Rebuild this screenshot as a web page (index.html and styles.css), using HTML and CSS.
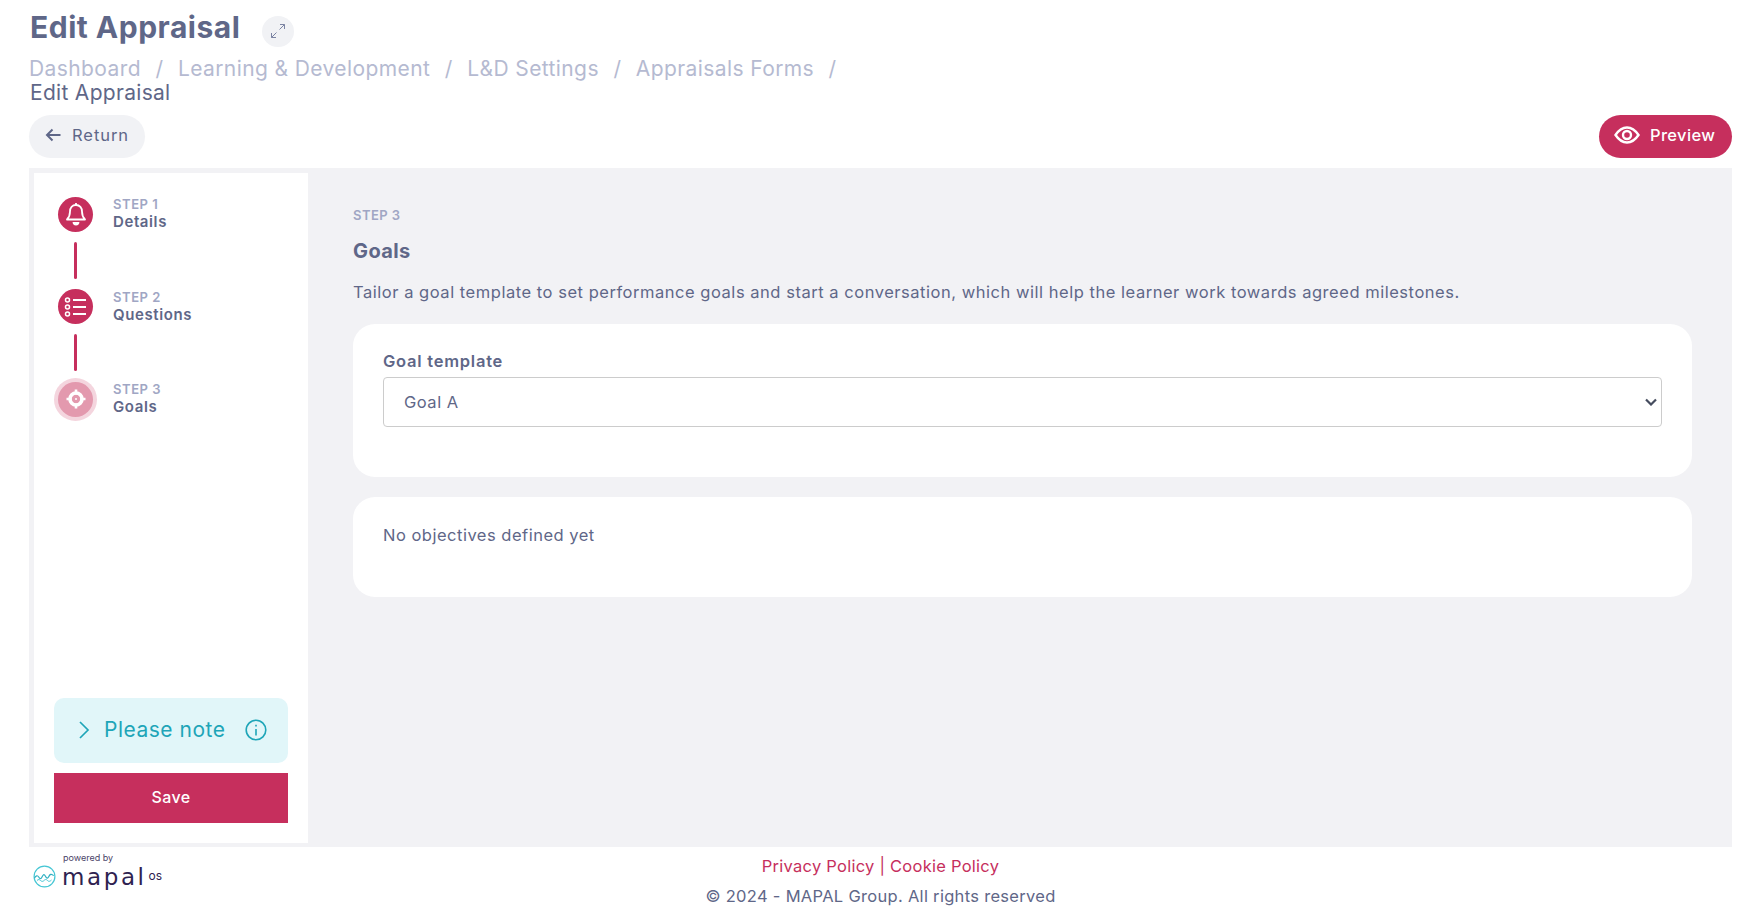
FILE: index.html
```html
<!DOCTYPE html>
<html lang="en">
<head>
<meta charset="utf-8">
<title>Edit Appraisal</title>
<link rel="stylesheet" href="styles.css">
</head>
<body>
<div class="page">
  <header class="head">
    <div class="title-row">
      <h1 class="title">Edit Appraisal</h1>
      <button class="expand" aria-label="Expand">
        <svg width="18" height="18" viewBox="0 0 18 18" fill="none" stroke="#7c84a3" stroke-width="1"><path d="M11 2.500h4.500V7M15.500 2.500 10.500 7.500M7 15.500H2.500V11M2.500 15.500l5-5"/></svg>
      </button>
    </div>
    <nav class="crumbs">
      <a>Dashboard</a><span class="sep">/</span><a>Learning &amp; Development</a><span class="sep">/</span><a>L&amp;D Settings</a><span class="sep">/</span><a>Appraisals Forms</a><span class="sep">/</span>
      <div class="current">Edit Appraisal</div>
    </nav>
    <div class="actions">
      <button class="return">
        <svg width="17" height="14" viewBox="0 0 17 14" fill="none" stroke="#5f6788" stroke-width="2"><path d="M15.500 7H2M7.500 1.500 2 7l5.500 5.500"/></svg>
        Return
      </button>
      <button class="preview">
        <svg width="26" height="18" viewBox="0 0 26 18" fill="none" stroke="#fff" stroke-width="2.400"><path d="M1.500 9C5 3.800 8.800 1.500 13 1.500S21 3.800 24.500 9C21 14.200 17.200 16.500 13 16.500S5 14.200 1.500 9Z"/><circle cx="13" cy="9" r="4"/></svg>
        Preview
      </button>
    </div>
  </header>

  <div class="shell">
    <aside class="side">
      <ol class="steps">
        <li class="step">
          <span class="dot">
            <svg width="22" height="24" viewBox="0 0 22 24" fill="none" stroke="#fff" stroke-width="1.800"><path d="M11 3c-3.800 0-6 2.800-6 6.500 0 4-1 6-3 8h18c-2-2-3-4-3-8C17 5.800 14.800 3 11 3Z" stroke-linejoin="round"/><path d="M11 1v2"/><path d="M8.500 20a2.500 2.500 0 0 0 5 0" fill="#fff"/></svg>
          </span>
          <div class="step-text"><div class="step-no">STEP 1</div><div class="step-name">Details</div></div>
        </li>
        <li class="line"></li>
        <li class="step">
          <span class="dot">
            <svg width="24" height="22" viewBox="0 0 24 22" fill="none" stroke="#fff" stroke-width="1.500"><circle cx="3.500" cy="4" r="2"/><circle cx="3.500" cy="11" r="2"/><circle cx="3.500" cy="18" r="2"/><path d="M9 4h13M9 11h13M9 18h13" stroke-width="1.800"/></svg>
          </span>
          <div class="step-text"><div class="step-no">STEP 2</div><div class="step-name">Questions</div></div>
        </li>
        <li class="line"></li>
        <li class="step">
          <span class="dot current-dot">
            <svg width="24" height="24" viewBox="0 0 24 24" fill="none" stroke="#fff"><circle cx="12" cy="12" r="6" stroke-width="3.600"/><circle cx="12" cy="12" r="1" fill="#fff" stroke="none"/><path d="M12 2.500v5M12 16.500v5M2.500 12h5M16.500 12h5" stroke-width="2.600"/></svg>
          </span>
          <div class="step-text"><div class="step-no">STEP 3</div><div class="step-name">Goals</div></div>
        </li>
      </ol>
      <div class="side-foot">
        <div class="note">
          <svg width="12" height="20" viewBox="0 0 12 20" fill="none" stroke="#1ea5b8" stroke-width="1.700"><path d="m2 2 8 8-8 8"/></svg>
          <span class="note-text">Please note</span>
          <svg width="22" height="22" viewBox="0 0 22 22" fill="none" stroke="#1ea5b8" stroke-width="1.600"><circle cx="11" cy="11" r="9.800"/><path d="M11 10v6.500"/><path d="M11 5.800v1.800"/></svg>
        </div>
        <button class="save">Save</button>
      </div>
    </aside>
    <main class="main">
      <div class="eyebrow">STEP 3</div>
      <h2 class="goals">Goals</h2>
      <p class="desc">Tailor a goal template to set performance goals and start a conversation, which will help the learner work towards agreed milestones.</p>
      <section class="card card-form">
        <label class="field-label" for="tpl">Goal template</label>
        <div class="select-wrap">
          <select id="tpl" class="select"><option>Goal A</option></select>
          <svg class="select-arrow" width="12" height="8" viewBox="0 0 12 8" fill="none" stroke="#454c5e" stroke-width="2.200"><path d="m1 1.500 5 5 5-5"/></svg>
        </div>
      </section>
      <section class="card card-empty">No objectives defined yet</section>
    </main>
  </div>

  <footer class="foot">
    <div class="logo">
      <svg class="logo-mark" width="23" height="23" viewBox="0 0 23 23" fill="none"><circle cx="11.500" cy="11.500" r="10.400" stroke="#45c6d4" stroke-width="1.200"/><path d="M1.500 13c1.500-2.500 3-3 4.200-1s2.300 2.300 3.300 0 2-3.500 3.300-1 2.300 3 3.400.7 2.500-3.500 5-1" stroke="#2fb0c2" stroke-width="1.200"/><path d="M4 15.500c1.500-1.500 2.500-1 3.500 0s2.500 1.300 3.500 0 2.500-1.300 3.500 0 2.500 1 4-.5" stroke="#45c6d4" stroke-width="1"/></svg>
      <div class="logo-text">
        <div class="powered">powered by</div>
        <div class="brand">mapal<sup class="os">os</sup></div>
      </div>
    </div>
    <div class="foot-links"><a>Privacy Policy</a> | <a>Cookie Policy</a></div>
    <div class="copy">© 2024 - MAPAL Group. All rights reserved</div>
  </footer>
</div>
</body>
</html>
```
FILE: styles.css
```css
* { box-sizing: border-box; }
html, body { margin: 0; padding: 0; height: 100%; background: #fff; }
body { font-family: Inter, "Open Sans", "Liberation Sans", sans-serif; color: #5f6788; overflow: hidden; }
button { font-family: inherit; border: 0; cursor: pointer; }
.page { padding: 0 26px 0 29px; height: 913px; display: flex; flex-direction: column; }
.head { height: 168px; display: flex; flex-direction: column; }
.title-row { display: flex; align-items: center; height: 57px; }
.title { margin: -3px 0 0 1px; font-size: 30px; line-height: 40px; font-weight: 700; color: #5f6788; letter-spacing: 0.5px; }
.expand { width: 32px; height: 31px; border-radius: 50%; background: #f1f2f5; margin-left: 22px; padding: 0; display: flex; align-items: center; justify-content: center; margin-top: 5px; }
.crumbs { font-size: 21px; line-height: 24px; color: #b5bad1; letter-spacing: 0.4px; }
.sep { margin: 0 14.500px; }
.current { color: #5f6788; margin-left: 1px; letter-spacing: 0.3px; }
.actions { display: flex; justify-content: space-between; margin-top: 10px; }
.return { height: 43px; width: 116px; border-radius: 22px; background: #f1f2f5; color: #5f6788; font-size: 16.500px; letter-spacing: 0.95px; display: flex; align-items: center; gap: 10px; padding: 0 0 3px 16px; }
.preview { height: 43px; width: 133px; border-radius: 22px; background: #c62f5d; color: #fff; font-size: 16.500px; font-weight: 500; letter-spacing: 0.35px; display: flex; align-items: center; gap: 10px; padding: 0 0 3px 15px; }
.shell { height: 679px; background: #f2f2f5; display: flex; padding: 5px 0 4px 5px; }
.side { width: 274px; background: #fff; padding: 20px 20px 20px 20px; display: flex; flex-direction: column; justify-content: space-between; }
.steps { list-style: none; margin: 0; padding: 0; }
.step { display: flex; height: 42px; align-items: center; }
.dot { width: 35px; height: 35px; margin: 0 4px; border-radius: 50%; background: #c62f5d; display: flex; align-items: center; justify-content: center; flex: none; }
.current-dot { background: #e399ae; box-shadow: 0 0 0 4px #f4d5de; }
.line { width: 3px; height: 37px; background: #c62f5d; margin: 6.500px 0 7px 20px; border-radius: 2px; }
.step-text { margin: -2px 0 0 16px; }
.step-no { font-size: 13px; line-height: 17px; font-weight: 600; color: #a0a6c4; letter-spacing: 0.55px; }
.step-name { font-size: 15px; line-height: 17px; font-weight: 600; color: #5f6788; letter-spacing: 0.6px; }
.note { height: 65px; background: #e1f6f9; border-radius: 10px; display: flex; align-items: center; padding: 0 21px 2px 24px; color: #1ea5b8; }
.note-text { font-size: 21px; flex: 1; margin-left: 14px; letter-spacing: 0.5px; }
.save { display: block; width: 100%; height: 50px; margin-top: 10px; background: #c62f5d; color: #fff; font-size: 16px; font-weight: 500; letter-spacing: 0.4px; padding: 0 0 3px; }
.main { flex: 1; padding: 34px 40px 0 45px; }
.eyebrow { font-size: 13px; line-height: 17px; font-weight: 600; color: #a0a6c4; letter-spacing: 0.45px; }
.goals { margin: 14px 0 0; font-size: 20px; line-height: 26px; font-weight: 700; color: #5f6788; letter-spacing: 0.4px; }
.desc { margin: 16px 0 0; font-size: 16.500px; line-height: 24px; color: #5f6788; letter-spacing: 0.53px; }
.card { background: #fff; border-radius: 22px; }
.card-form { margin-top: 20px; height: 153px; padding: 25px 30px 0; }
.field-label { display: block; font-size: 16.500px; line-height: 24px; font-weight: 600; color: #5f6788; letter-spacing: 0.75px; }
.select-wrap { margin-top: 4px; position: relative; }
.select { display: block; width: 100%; height: 50px; border: 1px solid #ccc; border-radius: 4px; background-color: #fff; color: #5f6788; font: 16.500px Inter, sans-serif; letter-spacing: 0.5px; padding: 0 20px 1px; appearance: none; }
.select-arrow { position: absolute; right: 5px; top: 21px; pointer-events: none; }
.card-empty { margin-top: 20px; height: 100px; padding: 26px 30px; font-size: 16.500px; line-height: 24px; letter-spacing: 0.5px; }
.foot { flex: 1; position: relative; text-align: center; font-size: 16.500px; padding-top: 7px; }
.foot-links { color: #c62f5d; line-height: 24px; letter-spacing: 0.25px; }
.copy { line-height: 24px; margin-top: 6px; color: #5f6788; letter-spacing: 0.3px; }
.logo { position: absolute; left: 4px; top: 6px; display: flex; gap: 6px; text-align: left; }
.logo-mark { margin-top: 12px; }
.powered { font-size: 9px; line-height: 10px; color: #4a4368; margin-left: 1px; }
.brand { font-family: "DejaVu Sans", sans-serif; font-size: 23px; line-height: 28px; color: #2e2250; letter-spacing: 2.600px; }
.os { font-family: Inter, sans-serif; font-size: 12px; line-height: 0; vertical-align: 5px; letter-spacing: 0; margin-left: 2px; }
```
